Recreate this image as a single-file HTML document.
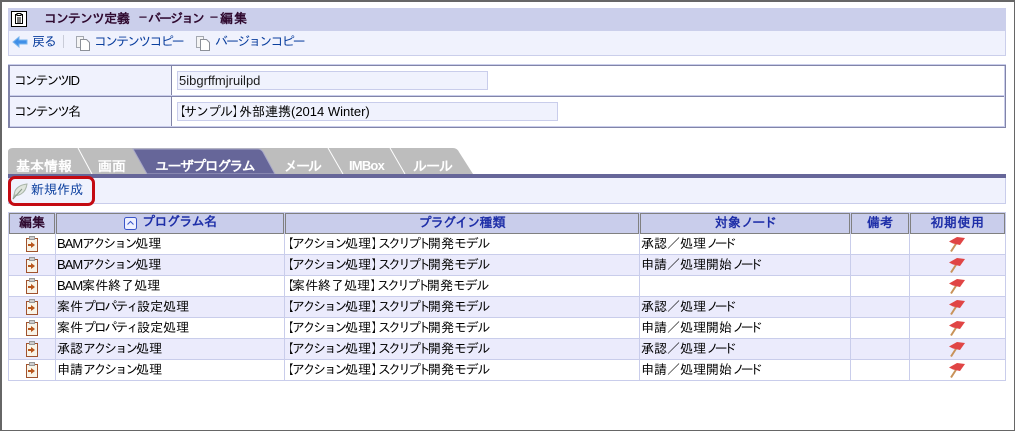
<!DOCTYPE html>
<html lang="ja"><head><meta charset="utf-8"><style>
html,body{margin:0;padding:0;background:#fff}
#p{position:relative;width:1015px;height:431px;overflow:hidden;background:#fff;font:13px/16px "Liberation Sans","IPAGothic","Noto Sans CJK JP",sans-serif;color:#000}
#p div,#p svg,#p span.t{position:absolute;box-sizing:border-box}
.t{white-space:nowrap}
i{font-style:normal}
.a{letter-spacing:-2.4px}.s{letter-spacing:-3px}.m{letter-spacing:-1.3px}.n{letter-spacing:-4.2px}.r{letter-spacing:-2.2px}.B{margin-left:-4px;letter-spacing:-2px}.L{letter-spacing:-6px}.x{letter-spacing:-1px}
.l{color:#0b3f9e}
.h{font-weight:bold;color:#1f2fa8;text-align:center;line-height:19px}
.th{background:#c9cdeb;border:1px solid #808080;height:21px}
.tab{font-weight:bold;color:#fff;font-size:14px}
.w{background:#fff;height:20px}.v{background:#ebebfc;height:20px}
</style></head><body><div id="p">
<div style="left:0;top:0;width:1015px;height:431px;border:1px solid #666;border-left-width:2px;border-top-width:2px"></div>

<div style="left:8px;top:8px;width:998px;height:23px;background:#cbcfeb"></div>
<div style="left:8px;top:31px;width:998px;height:25px;background:#f0f2fd;border:1px solid #cbcfeb;border-top:0"></div>
<svg style="left:11px;top:11px" width="17" height="17" viewBox="0 0 17 17"><rect x=".5" y=".5" width="15" height="15" fill="#fff" stroke="#000"/><path d="M4.500 3.500h7v9h-7z" fill="#fff" stroke="#000"/><path d="M6 2.500h4v2H6zM6 7h4M6 9h4M6 11h4" fill="#fff" stroke="#000"/></svg>
<span class="t" style="left:44px;top:11px;font-weight:bold;color:#300a30"><i style="letter-spacing:-1px">コンテンツ</i>定義</span>
<span class="t" style="left:138px;top:11px;font-weight:bold;color:#300a30;font-size:10px">－</span>
<span class="t" style="left:148px;top:11px;font-weight:bold;color:#300a30"><i style="letter-spacing:-2px">バージョン</i></span>
<span class="t" style="left:209px;top:11px;font-weight:bold;color:#300a30;font-size:10px">－</span>
<span class="t" style="left:220px;top:11px;font-weight:bold;color:#300a30;letter-spacing:1px">編集</span>
<svg style="left:12px;top:36px" width="17" height="12" viewBox="0 0 17 12"><path d="M1 6l6-5v3h8v4H7v3z" fill="#3f8fe8" stroke="#7ab5ee"/></svg>
<span class="t l" style="left:32px;top:34px;letter-spacing:-1px">戻る</span>
<div style="left:63px;top:35px;width:1px;height:13px;background:#c9ccd8"></div>
<svg style="left:76px;top:36px" width="15" height="16" viewBox="0 0 15 16"><path d="M.5.500h7v11h-7z" fill="#f4f4f4" stroke="#a4a8b0"/><path d="M4.500 3.500h6l3 3v8h-9z" fill="#fff" stroke="#8c9098"/></svg>
<span class="t l" style="left:94px;top:34px;letter-spacing:-1.9px">コンテンツコピー</span>
<svg style="left:196px;top:36px" width="15" height="16" viewBox="0 0 15 16"><path d="M.5.500h7v11h-7z" fill="#f4f4f4" stroke="#a4a8b0"/><path d="M4.500 3.500h6l3 3v8h-9z" fill="#fff" stroke="#8c9098"/></svg>
<span class="t l" style="left:215px;top:34px;letter-spacing:-1.9px">バージョンコピー</span>

<div style="left:8px;top:64px;width:998px;height:1px;background:#c9cdeb"></div>
<div style="left:8px;top:65px;width:998px;height:63px;background:#8184a8"></div>
<div style="left:10px;top:66px;width:161px;height:29px;background:#f0f2fd"></div>
<div style="left:10px;top:97px;width:161px;height:29px;background:#f0f2fd"></div>
<div style="left:172px;top:66px;width:832px;height:29px;background:#fff"></div>
<div style="left:172px;top:97px;width:832px;height:29px;background:#fff"></div>
<div style="left:10px;top:95px;width:994px;height:1px;background:#c9cdeb"></div>
<div style="left:10px;top:126px;width:994px;height:1px;background:#c9cdeb"></div>
<div style="left:1004px;top:66px;width:1px;height:61px;background:#c9cdeb"></div>
<span class="t" style="left:14px;top:73px"><i class="r">コンテンツ</i><i class="x">ID</i></span>
<span class="t" style="left:14px;top:104px"><i class="r">コンテンツ</i>名</span>
<div style="left:177px;top:71px;width:311px;height:19px;background:#f0f2fd;border:1px solid #c9cdeb"></div>
<div style="left:177px;top:102px;width:381px;height:19px;background:#f0f2fd;border:1px solid #c9cdeb"></div>
<span class="t" style="left:179px;top:73px;color:#1d1d1d">5ibgrffmjruilpd</span>
<span class="t" style="left:177px;top:104px"><i class="B">【</i><i style="letter-spacing:-1px">サンプル</i><i class="L">】</i>外部連携(2014 Winter)</span>

<svg style="left:8px;top:148px" width="470" height="27" viewBox="0 0 470 27">
<path d="M0 26V4Q0 0 5 0H445Q449 0 451 4L465 26Z" fill="#bdbdbd"/>
<path d="M70 0L84 26M320 0L335 26M382 0L397 26" stroke="#fff" fill="none"/>
<path d="M125 1H250Q253 1 255 4L267 26H139Z" fill="#666699" stroke="#a8a8c8"/>
</svg>
<span class="t tab" style="left:16px;top:158px">基本情報</span>
<span class="t tab" style="left:98px;top:158px">画面</span>
<span class="t tab" style="left:155px;top:158px;letter-spacing:-1.600px">ユーザプログラム</span>
<span class="t tab" style="left:284px;top:158px;letter-spacing:-2px">メール</span>
<span class="t tab" style="left:349px;top:158px;font-size:13px;letter-spacing:-.8px">IMBox</span>
<span class="t tab" style="left:413px;top:158px;letter-spacing:-1px">ルール</span>
<div style="left:8px;top:174px;width:998px;height:4px;background:#666699"></div>
<div style="left:8px;top:178px;width:998px;height:26px;background:#f0f2fd;border:1px solid #c9cdeb;border-top:0"></div>
<svg style="left:12px;top:183px" width="16" height="17" viewBox="0 0 16 17"><path d="M1 16L3 8Q6 2 15 1Q14 8 9 11Q6 13 3 12Z" fill="#dfe5dd" stroke="#a8b4a8"/><path d="M1 16L10 6" stroke="#8a9a8a" fill="none"/></svg>
<span class="t l" style="left:31px;top:182px">新規作成</span>
<div style="left:8px;top:176px;width:87px;height:30px;border:3px solid #c40a12;border-radius:7px"></div>

<div style="left:8px;top:212px;width:998px;height:169px;background:#c9cdeb"></div>
<div class="th" style="left:9px;top:213px;width:46px"></div>
<div class="th" style="left:56px;top:213px;width:228px"></div>
<div class="th" style="left:285px;top:213px;width:354px"></div>
<div class="th" style="left:640px;top:213px;width:210px"></div>
<div class="th" style="left:851px;top:213px;width:58px"></div>
<div class="th" style="left:910px;top:213px;width:95px"></div>
<span class="t h" style="left:9px;top:213px;width:46px;color:#300a30">編集</span>
<svg style="left:124px;top:217px" width="13" height="13" viewBox="0 0 13 13"><rect x=".5" y=".5" width="12" height="12" rx="2" fill="#eef0ff" stroke="#3a55c8"/><path d="M3.500 7.500l3-3 3 3" fill="none" stroke="#3a55c8"/></svg>
<span class="t h" style="left:142px;top:212px"><i style="letter-spacing:-.6px">プログラム</i>名</span>
<span class="t h" style="left:285px;top:213px;width:354px"><i style="letter-spacing:-.8px">プラグイン</i>種類</span>
<span class="t h" style="left:640px;top:213px;width:210px">対象<i style="letter-spacing:-1.700px">ノード</i></span>
<span class="t h" style="left:851px;top:213px;width:58px">備考</span>
<span class="t h" style="left:910px;top:213px;width:95px;letter-spacing:.5px">初期使用</span>

<div class="w" style="left:9px;top:234px;width:46px"></div><div class="w" style="left:56px;top:234px;width:228px"></div><div class="w" style="left:285px;top:234px;width:354px"></div><div class="w" style="left:640px;top:234px;width:210px"></div><div class="w" style="left:851px;top:234px;width:58px"></div><div class="w" style="left:910px;top:234px;width:95px"></div>
<div class="v" style="left:9px;top:255px;width:46px"></div><div class="v" style="left:56px;top:255px;width:228px"></div><div class="v" style="left:285px;top:255px;width:354px"></div><div class="v" style="left:640px;top:255px;width:210px"></div><div class="v" style="left:851px;top:255px;width:58px"></div><div class="v" style="left:910px;top:255px;width:95px"></div>
<div class="w" style="left:9px;top:276px;width:46px"></div><div class="w" style="left:56px;top:276px;width:228px"></div><div class="w" style="left:285px;top:276px;width:354px"></div><div class="w" style="left:640px;top:276px;width:210px"></div><div class="w" style="left:851px;top:276px;width:58px"></div><div class="w" style="left:910px;top:276px;width:95px"></div>
<div class="v" style="left:9px;top:297px;width:46px"></div><div class="v" style="left:56px;top:297px;width:228px"></div><div class="v" style="left:285px;top:297px;width:354px"></div><div class="v" style="left:640px;top:297px;width:210px"></div><div class="v" style="left:851px;top:297px;width:58px"></div><div class="v" style="left:910px;top:297px;width:95px"></div>
<div class="w" style="left:9px;top:318px;width:46px"></div><div class="w" style="left:56px;top:318px;width:228px"></div><div class="w" style="left:285px;top:318px;width:354px"></div><div class="w" style="left:640px;top:318px;width:210px"></div><div class="w" style="left:851px;top:318px;width:58px"></div><div class="w" style="left:910px;top:318px;width:95px"></div>
<div class="v" style="left:9px;top:339px;width:46px"></div><div class="v" style="left:56px;top:339px;width:228px"></div><div class="v" style="left:285px;top:339px;width:354px"></div><div class="v" style="left:640px;top:339px;width:210px"></div><div class="v" style="left:851px;top:339px;width:58px"></div><div class="v" style="left:910px;top:339px;width:95px"></div>
<div class="w" style="left:9px;top:360px;width:46px"></div><div class="w" style="left:56px;top:360px;width:228px"></div><div class="w" style="left:285px;top:360px;width:354px"></div><div class="w" style="left:640px;top:360px;width:210px"></div><div class="w" style="left:851px;top:360px;width:58px"></div><div class="w" style="left:910px;top:360px;width:95px"></div>

<span class="t" style="left:57px;top:236px"><i class="x">BAM</i><i class="a">アクション</i>処理</span><span class="t" style="left:285px;top:236px"><i class="B">【</i><i class="a">アクション</i>処理<i class="L">】</i><i class="s">スクリプト</i>開発<i class="m">モデル</i></span><span class="t" style="left:641px;top:236px">承認／処理<i class="n">ノード</i></span>
<span class="t" style="left:57px;top:257px"><i class="x">BAM</i><i class="a">アクション</i>処理</span><span class="t" style="left:285px;top:257px"><i class="B">【</i><i class="a">アクション</i>処理<i class="L">】</i><i class="s">スクリプト</i>開発<i class="m">モデル</i></span><span class="t" style="left:641px;top:257px">申請／処理開始<i class="n">ノード</i></span>
<span class="t" style="left:57px;top:278px"><i class="x">BAM</i>案件終了処理</span><span class="t" style="left:285px;top:278px"><i class="B">【</i>案件終了処理<i class="L">】</i><i class="s">スクリプト</i>開発<i class="m">モデル</i></span>
<span class="t" style="left:57px;top:299px">案件<i class="r">プロパティ</i>設定処理</span><span class="t" style="left:285px;top:299px"><i class="B">【</i><i class="a">アクション</i>処理<i class="L">】</i><i class="s">スクリプト</i>開発<i class="m">モデル</i></span><span class="t" style="left:641px;top:299px">承認／処理<i class="n">ノード</i></span>
<span class="t" style="left:57px;top:320px">案件<i class="r">プロパティ</i>設定処理</span><span class="t" style="left:285px;top:320px"><i class="B">【</i><i class="a">アクション</i>処理<i class="L">】</i><i class="s">スクリプト</i>開発<i class="m">モデル</i></span><span class="t" style="left:641px;top:320px">申請／処理開始<i class="n">ノード</i></span>
<span class="t" style="left:57px;top:341px">承認<i class="a">アクション</i>処理</span><span class="t" style="left:285px;top:341px"><i class="B">【</i><i class="a">アクション</i>処理<i class="L">】</i><i class="s">スクリプト</i>開発<i class="m">モデル</i></span><span class="t" style="left:641px;top:341px">承認／処理<i class="n">ノード</i></span>
<span class="t" style="left:57px;top:362px">申請<i class="a">アクション</i>処理</span><span class="t" style="left:285px;top:362px"><i class="B">【</i><i class="a">アクション</i>処理<i class="L">】</i><i class="s">スクリプト</i>開発<i class="m">モデル</i></span><span class="t" style="left:641px;top:362px">申請／処理開始<i class="n">ノード</i></span>

<svg style="left:26px;top:236px" width="13" height="16" viewBox="0 0 13 16"><path d="M.5 2.500h11v13H.5z" fill="#f8f4e8" stroke="#a0522d"/><path d="M3.500 .5h5v3h-5z" fill="#ccc" stroke="#999"/><path d="M2 8h3V6l4 3-4 3v-2H2z" fill="#b8561c"/></svg>
<svg style="left:26px;top:257px" width="13" height="16" viewBox="0 0 13 16"><path d="M.5 2.500h11v13H.5z" fill="#f8f4e8" stroke="#a0522d"/><path d="M3.500 .5h5v3h-5z" fill="#ccc" stroke="#999"/><path d="M2 8h3V6l4 3-4 3v-2H2z" fill="#b8561c"/></svg>
<svg style="left:26px;top:278px" width="13" height="16" viewBox="0 0 13 16"><path d="M.5 2.500h11v13H.5z" fill="#f8f4e8" stroke="#a0522d"/><path d="M3.500 .5h5v3h-5z" fill="#ccc" stroke="#999"/><path d="M2 8h3V6l4 3-4 3v-2H2z" fill="#b8561c"/></svg>
<svg style="left:26px;top:299px" width="13" height="16" viewBox="0 0 13 16"><path d="M.5 2.500h11v13H.5z" fill="#f8f4e8" stroke="#a0522d"/><path d="M3.500 .5h5v3h-5z" fill="#ccc" stroke="#999"/><path d="M2 8h3V6l4 3-4 3v-2H2z" fill="#b8561c"/></svg>
<svg style="left:26px;top:320px" width="13" height="16" viewBox="0 0 13 16"><path d="M.5 2.500h11v13H.5z" fill="#f8f4e8" stroke="#a0522d"/><path d="M3.500 .5h5v3h-5z" fill="#ccc" stroke="#999"/><path d="M2 8h3V6l4 3-4 3v-2H2z" fill="#b8561c"/></svg>
<svg style="left:26px;top:341px" width="13" height="16" viewBox="0 0 13 16"><path d="M.5 2.500h11v13H.5z" fill="#f8f4e8" stroke="#a0522d"/><path d="M3.500 .5h5v3h-5z" fill="#ccc" stroke="#999"/><path d="M2 8h3V6l4 3-4 3v-2H2z" fill="#b8561c"/></svg>
<svg style="left:26px;top:362px" width="13" height="16" viewBox="0 0 13 16"><path d="M.5 2.500h11v13H.5z" fill="#f8f4e8" stroke="#a0522d"/><path d="M3.500 .5h5v3h-5z" fill="#ccc" stroke="#999"/><path d="M2 8h3V6l4 3-4 3v-2H2z" fill="#b8561c"/></svg>

<svg style="left:949px;top:237px" width="17" height="16" viewBox="0 0 17 16"><path d="M2 14.500L7.500 6" stroke="#c8935a" stroke-width="2"/><path d="M0 4.500L8 0l8 1-5 7-7-1.500z" fill="#e04545"/></svg>
<svg style="left:949px;top:258px" width="17" height="16" viewBox="0 0 17 16"><path d="M2 14.500L7.500 6" stroke="#c8935a" stroke-width="2"/><path d="M0 4.500L8 0l8 1-5 7-7-1.500z" fill="#e04545"/></svg>
<svg style="left:949px;top:279px" width="17" height="16" viewBox="0 0 17 16"><path d="M2 14.500L7.500 6" stroke="#c8935a" stroke-width="2"/><path d="M0 4.500L8 0l8 1-5 7-7-1.500z" fill="#e04545"/></svg>
<svg style="left:949px;top:300px" width="17" height="16" viewBox="0 0 17 16"><path d="M2 14.500L7.500 6" stroke="#c8935a" stroke-width="2"/><path d="M0 4.500L8 0l8 1-5 7-7-1.500z" fill="#e04545"/></svg>
<svg style="left:949px;top:321px" width="17" height="16" viewBox="0 0 17 16"><path d="M2 14.500L7.500 6" stroke="#c8935a" stroke-width="2"/><path d="M0 4.500L8 0l8 1-5 7-7-1.500z" fill="#e04545"/></svg>
<svg style="left:949px;top:342px" width="17" height="16" viewBox="0 0 17 16"><path d="M2 14.500L7.500 6" stroke="#c8935a" stroke-width="2"/><path d="M0 4.500L8 0l8 1-5 7-7-1.500z" fill="#e04545"/></svg>
<svg style="left:949px;top:363px" width="17" height="16" viewBox="0 0 17 16"><path d="M2 14.500L7.500 6" stroke="#c8935a" stroke-width="2"/><path d="M0 4.500L8 0l8 1-5 7-7-1.500z" fill="#e04545"/></svg>
</div></body></html>
